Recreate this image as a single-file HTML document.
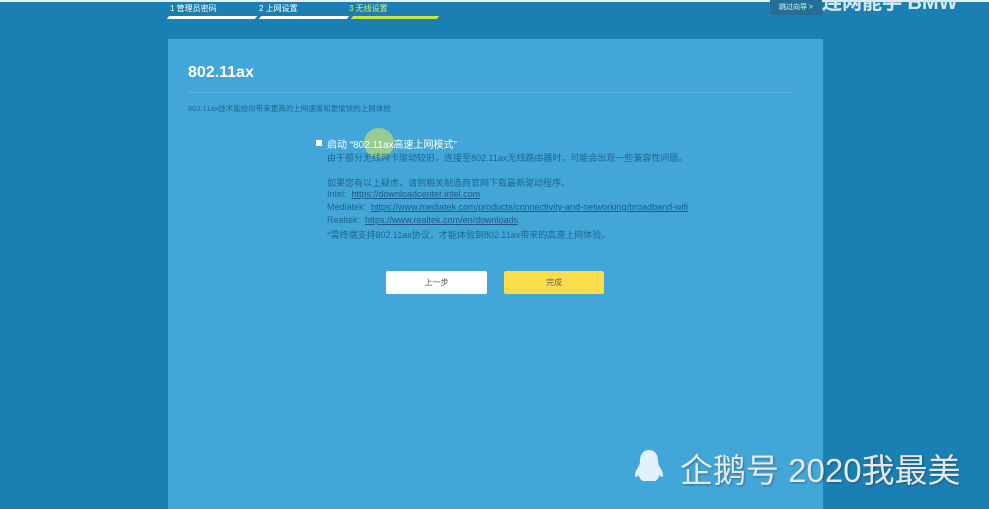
<html><head><style>
body{margin:0;width:989px;height:502px;background:#1a80b3;position:relative;overflow:hidden;font-family:"Liberation Sans","Noto Sans CJK SC",sans-serif}
.a{position:absolute;white-space:nowrap}
.s{font-size:8px;color:#fff}
.bar{position:absolute;top:16px;height:3px;background:#fff;transform:skewX(-40deg)}
.t{font-size:9px;color:#1f6690}
.t u{color:#1b5a82}
</style></head><body>
<div class="a" style="left:0;top:0;width:989px;height:2px;background:#e8eef2"></div>
<div class="a s" style="left:170px;top:3px">1 管理员密码</div>
<div class="a s" style="left:259px;top:3px">2 上网设置</div>
<div class="a s" style="left:349px;top:3px;color:#d8f06a">3 无线设置</div>
<div class="bar" style="left:168px;width:88px"></div>
<div class="bar" style="left:260px;width:88px"></div>
<div class="bar" style="left:352px;width:86px;background:#c7e34a"></div>
<div class="a" style="left:770px;top:0;width:52px;height:15px;background:#256e96;font-size:7px;color:#dfe;line-height:15px;text-align:center">跳过向导 &gt;</div>
<div class="a" style="left:822px;top:-14px;font-size:20px;font-weight:bold;color:#d8e8f0">连网能手 BMW</div>
<div class="a" style="left:168px;top:39px;width:655px;height:470px;background:#42a6d8"></div>
<div class="a" style="left:188px;top:64px;font-size:16px;font-weight:bold;color:#fff">802.11ax</div>
<div class="a" style="left:188px;top:92px;width:605px;height:1px;background:#5fb4df"></div>
<div class="a" style="left:188px;top:103px;font-size:7.5px;color:#1f6690">802.11ax技术能给你带来更高的上网速度和更愉快的上网体验</div>
<div class="a" style="left:316px;top:140px;width:6px;height:6px;background:#fff"></div>
<div class="a" style="left:364px;top:128px;width:30px;height:30px;border-radius:50%;background:rgba(190,220,120,.7)"></div>
<div class="a" style="left:327px;top:136px;font-size:10px;color:#fff">启动 “802.11ax高速上网模式”</div>
<div class="a t" style="left:327px;top:151px">由于部分无线网卡驱动较旧，连接至802.11ax无线路由器时，可能会出现一些兼容性问题。</div>
<div class="a t" style="left:327px;top:176px">如果您有以上疑虑，请到相关制造商官网下载最新驱动程序。</div>
<div class="a t" style="left:327px;top:189px">Intel: &nbsp;<u>https://downloadcenter.intel.com</u></div>
<div class="a t" style="left:327px;top:202px">Mediatek: &nbsp;<u>https://www.mediatek.com/products/connectivity-and-networking/broadband-wifi</u></div>
<div class="a t" style="left:327px;top:215px">Realtek: &nbsp;<u>https://www.realtek.com/en/downloads</u></div>
<div class="a t" style="left:327px;top:228px">*需终端支持802.11ax协议，才能体验到802.11ax带来的高速上网体验。</div>
<div class="a" style="left:386px;top:271px;width:101px;height:23px;background:#fff;border-radius:2px;font-size:8px;color:#555;text-align:center;line-height:23px">上一步</div>
<div class="a" style="left:504px;top:271px;width:100px;height:23px;background:#fbdc4a;border-radius:2px;font-size:8px;color:#666;text-align:center;line-height:23px">完成</div>
<svg class="a" style="left:632px;top:448px" width="34" height="36" viewBox="0 0 34 36"><path d="M17 2C11 2 8 7 8 13c0 3-1 5-3 8-2 4-3 7-1 8 1 0 3-2 3-2 0 3 2 5 4 6h12c2-1 4-3 4-6 0 0 2 2 3 2 2-1 1-4-1-8-2-3-3-5-3-8 0-6-3-11-9-11z" fill="#e2f1fb"/></svg>
<div class="a" style="left:680px;top:444px;font-size:33px;color:#e8e8e8;text-shadow:1px 1px 2px rgba(0,0,0,.3)">企鹅号 2020我最美</div>
</body></html>
